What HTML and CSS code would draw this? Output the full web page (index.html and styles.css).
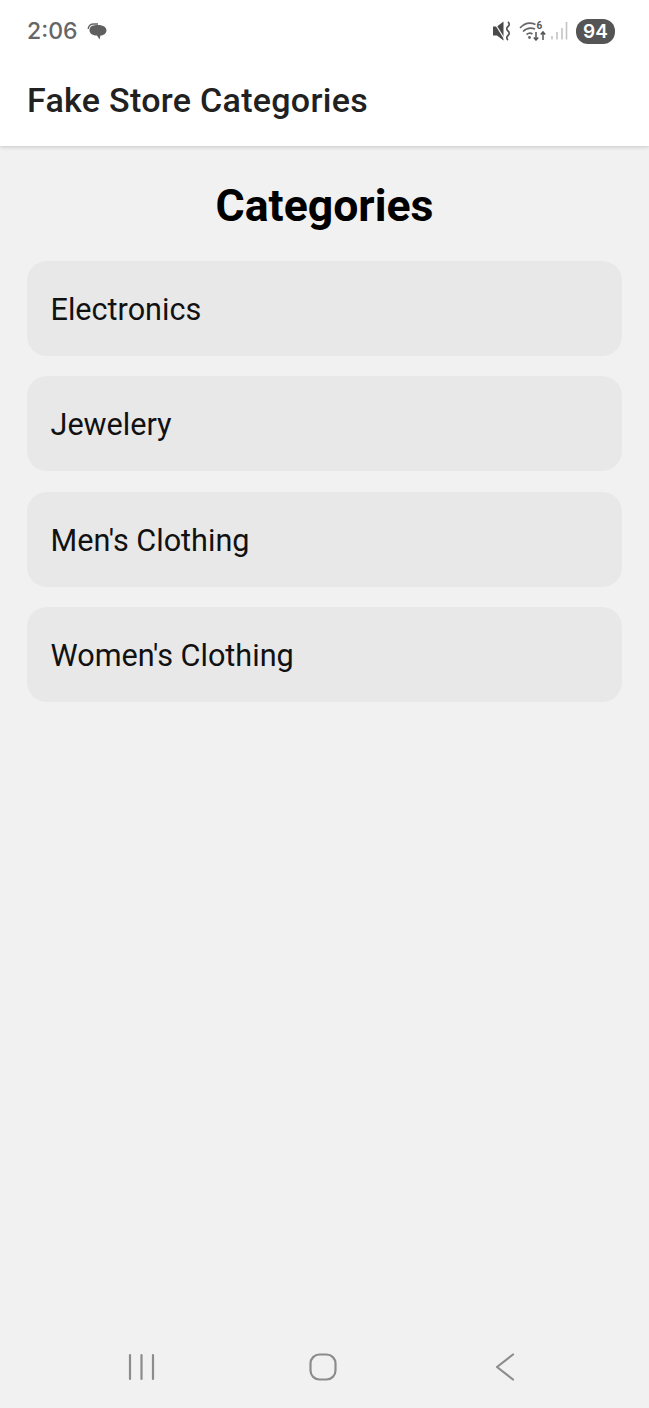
FILE: index.html
```html
<!DOCTYPE html>
<html lang="en">
<head>
    <meta charset="UTF-8">
    <meta name="viewport" content="width=device-width, initial-scale=1.0">
    <title>Fake Store Categories</title>
    <link rel="stylesheet" href="styles.css">
</head>
<body>
    <div class="app">
        <header class="top">
            <div class="status">
                <div class="status-left">
                    <span class="time">2:06</span>
                    <svg class="chat-icon" width="22" height="20" viewBox="0 0 22 20">
                        <path d="M2.200 8 C2.500 4.500 5 3 8 3 L12 3" fill="none" stroke="#666" stroke-width="1.400"/>
                        <path d="M10 4 C15 3.600 20.500 5 20.500 9.500 C20.500 12.500 17 14.500 14.500 14.500 L13.500 18.500 L11 14.500 C7 14.500 3.500 12.500 3.500 9.500 C3.500 5.500 6.500 4.300 10 4 Z" fill="#5f5f5f"/>
                    </svg>
                </div>
                <div class="status-right">
                    <svg class="mute" width="20" height="22" viewBox="0 0 20 22">
                        <path d="M1 6.500 H5 L11.500 1.500 V20.500 L5 15.500 H1 Z" fill="#4a4a4a"/>
                        <path d="M2 2 L12.500 19" stroke="#fff" stroke-width="1.200"/>
                        <path d="M16 2 q2.500 2.200 0 4.500 q-2.500 2.200 0 4.500 q2.500 2.300 0 4.500 q-2.500 2.300 0 4.500" fill="none" stroke="#555" stroke-width="1.700"/>
                    </svg>
                    <svg class="wifi" width="28" height="20" viewBox="0 0 28 20">
                        <path d="M1 7 C6 1.500 12 1.500 16.500 3.500" fill="none" stroke="#666" stroke-width="1.600"/>
                        <path d="M4 10.500 C8 6.500 12 6.500 16 8" fill="none" stroke="#666" stroke-width="1.600"/>
                        <path d="M7.500 13.500 C9.500 12 12 12 13.500 13" fill="none" stroke="#666" stroke-width="1.600"/>
                        <circle cx="10.500" cy="16.500" r="1.400" fill="#666"/>
                        <text x="17.500" y="8" class="wifi-num">6</text>
                        <path d="M17 11 V19 M14.800 16.500 L17 19 L19.200 16.500" fill="none" stroke="#555" stroke-width="1.500"/>
                        <path d="M24 19 V11 M21.800 13.500 L24 11 L26.200 13.500" fill="none" stroke="#555" stroke-width="1.500"/>
                    </svg>
                    <svg class="signal" width="18" height="20" viewBox="0 0 18 20">
                        <path d="M2 18.500 V15 M7 18.500 V11 M12 18.500 V7 M16.500 18.500 V1" stroke="#c4c4c4" stroke-width="1.600"/>
                    </svg>
                    <span class="battery">94</span>
                </div>
            </div>
            <div class="app-title">Fake Store Categories</div>
        </header>

        <main class="content">
            <h1>Categories</h1>
            <div class="list">
                <div class="item">Electronics</div>
                <div class="item">Jewelery</div>
                <div class="item">Men's Clothing</div>
                <div class="item">Women's Clothing</div>
            </div>
        </main>

        <nav class="nav">
            <svg width="28" height="28" viewBox="0 0 28 28">
                <path d="M2 2 V26 M13.500 2 V26 M25 2 V26" stroke="#8c8c8c" stroke-width="2.200" stroke-linecap="round"/>
            </svg>
            <svg width="28" height="28" viewBox="0 0 28 28">
                <rect x="1.500" y="1.500" width="25" height="25" rx="9" fill="none" stroke="#8c8c8c" stroke-width="2.200"/>
            </svg>
            <svg width="20" height="28" viewBox="0 0 20 28">
                <path d="M18 1.500 L2 14 L18 26.500" fill="none" stroke="#8c8c8c" stroke-width="2.200" stroke-linecap="round" stroke-linejoin="round"/>
            </svg>
        </nav>
    </div>
</body>
</html>
```

FILE: styles.css
```css
* {
    box-sizing: border-box;
}

body {
    margin: 0;
    font-family: Roboto, "Noto Sans", sans-serif;
    background: #f1f1f1;
}

.app {
    height: 1408px;
    display: flex;
    flex-direction: column;
}

.top {
    background: white;
    height: 146px;
    padding: 0 27px;
    box-shadow: 0 1px 4px rgba(0,0,0,0.18);
}

.status {
    height: 62px;
    display: flex;
    justify-content: space-between;
    align-items: center;
}

.status-left {
    display: flex;
    align-items: center;
    gap: 9px;
}

.time {
    font-family: Inter, Roboto, sans-serif;
    font-size: 23px;
    font-weight: 500;
    color: #666;
}

.status-right {
    display: flex;
    align-items: center;
    gap: 3px;
    margin-right: 7px;
}

.mute {
    margin-right: 4px;
}

.wifi-num {
    font-family: Roboto, sans-serif;
    font-size: 10px;
    font-weight: bold;
    fill: #555;
}

.battery {
    background: #555;
    color: white;
    font-family: Inter, Roboto, sans-serif;
    font-size: 19px;
    font-weight: 600;
    line-height: 25px;
    height: 25px;
    width: 39px;
    text-align: center;
    border-radius: 12px;
    margin-left: 5px;
}

.app-title {
    margin-top: 18px;
    font-size: 34px;
    font-weight: 500;
    letter-spacing: 0.3px;
    line-height: 40px;
    color: #212121;
}

.content {
    flex: 1;
    padding: 34px 27px 0;
}

h1 {
    margin: 0 0 29px;
    text-align: center;
    font-size: 44.6px;
    font-weight: bold;
    line-height: 52px;
    color: black;
}

.list {
    display: flex;
    flex-direction: column;
    gap: 20.3px;
}

.item {
    height: 95px;
    padding: 2px 23.5px 0;
    display: flex;
    align-items: center;
    background: #e8e8e8;
    border-radius: 20px;
    font-size: 30.6px;
    color: #111;
}

.nav {
    height: 82px;
    padding: 27px 3px 0 0;
    display: grid;
    grid-template-columns: repeat(3, 181.5px);
    justify-content: center;
    justify-items: center;
    align-items: start;
}
```
